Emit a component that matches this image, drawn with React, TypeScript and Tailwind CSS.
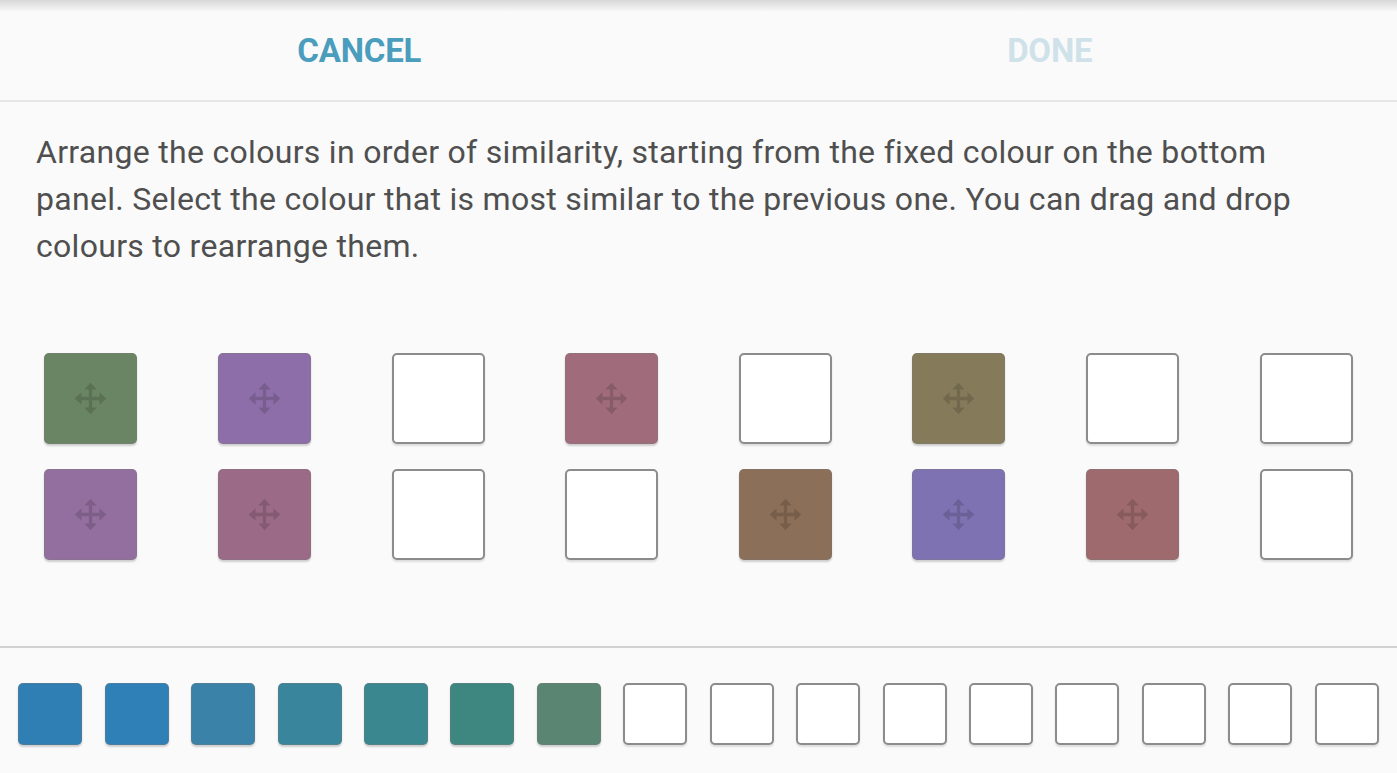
import React from "react";

// four-way drag handle, thin shafts with triangle heads
const Move = ({ className }: { className?: string }) => (
  <svg viewBox="0 0 24 24" className={className} fill="currentColor">
    <path d="M12 0.5L16.5 5.5H13.2V10.8H18.5V7.5L23.5 12L18.5 16.5V13.2H13.2V18.5H16.5L12 23.5L7.5 18.5H10.8V13.2H5.5V16.5L0.5 12L5.5 7.5V10.8H10.8V5.5H7.5Z" />
  </svg>
);

const rows: (string | null)[][] = [
  ["#6a8563", "#8e6ea8", null, "#a06c7b", null, "#857b5b", null, null],
  ["#936fa0", "#9b6a87", null, null, "#8b6f58", "#7f72b2", "#9f6a6d", null],
];

const tray: (string | null)[] = [
  "#2f7fb5", "#2f80b7", "#3a82a8", "#39859b", "#3b8790", "#3d8780", "#5a8572",
  null, null, null, null, null, null, null, null, null,
];

function Tile({ color }: { color: string | null }) {
  if (!color)
    return <div className="w-[93px] h-[91px] rounded-[5px] bg-white border-2 border-[#8c8c8c] shadow-[0_2px_2px_rgba(0,0,0,0.12)]" />;
  return (
    <div className="w-[93px] h-[91px] rounded-[5px] border border-[#7a7a7a]/40 shadow-[0_2px_2px_rgba(0,0,0,0.18)] flex items-center justify-center" style={{ backgroundColor: color }}>
      <Move className="size-[33px] text-black/15" />
    </div>
  );
}

function Chip({ color }: { color: string | null }) {
  if (!color)
    return <div className="w-[64px] h-[62px] rounded-[5px] bg-white border-2 border-[#8c8c8c] shadow-[0_2px_2px_rgba(0,0,0,0.12)]" />;
  return <div className="w-[64px] h-[62px] rounded-[5px] border border-[#7a7a7a]/40 shadow-[0_2px_2px_rgba(0,0,0,0.18)]" style={{ backgroundColor: color }} />;
}

export default function App() {
  return (
    <div className="w-[1397px] h-[773px] overflow-hidden bg-[#fafafa] flex flex-col font-['Roboto',sans-serif]">
      <div className="relative h-[100px] flex-none flex items-center pt-[2px]">
        <div className="absolute inset-x-0 top-0 h-[12px] bg-gradient-to-b from-[#d8d8d8] to-[#fafafa]" />
        <div className="flex-1 flex justify-center pl-[14px]">
          <span className="text-[33px] font-bold tracking-[-0.2px] text-[#4a9dbd]">CANCEL</span>
        </div>
        <div className="flex-1 flex justify-center pr-[2px]">
          <span className="text-[33px] font-bold tracking-[-0.2px] text-[#cfe2ea]">DONE</span>
        </div>
      </div>
      <div className="h-[2px] bg-[#e6e6e6] flex-none" />
      <p className="pt-[27px] pl-[36px] pr-[80px] text-[32px] leading-[47px] tracking-[0.3px] text-[#4f4f4f]">
        Arrange the colours in order of similarity, starting from the fixed colour on the bottom panel. Select the colour that is most similar to the previous one. You can drag and drop colours to rearrange them.
      </p>
      <div className="mt-[83px] px-[4px] flex flex-col gap-[25px]">
        {rows.map((row, i) => (
          <div key={i} className="grid grid-cols-8 justify-items-center">
            {row.map((c, j) => <Tile key={j} color={c} />)}
          </div>
        ))}
      </div>
      <div className="mt-[86px] h-[2px] bg-[#d2d2d2] flex-none" />
      <div className="mt-[35px] px-[7px] grid grid-cols-[repeat(16,minmax(0,1fr))] justify-items-center">
        {tray.map((c, i) => <Chip key={i} color={c} />)}
      </div>
    </div>
  );
}
